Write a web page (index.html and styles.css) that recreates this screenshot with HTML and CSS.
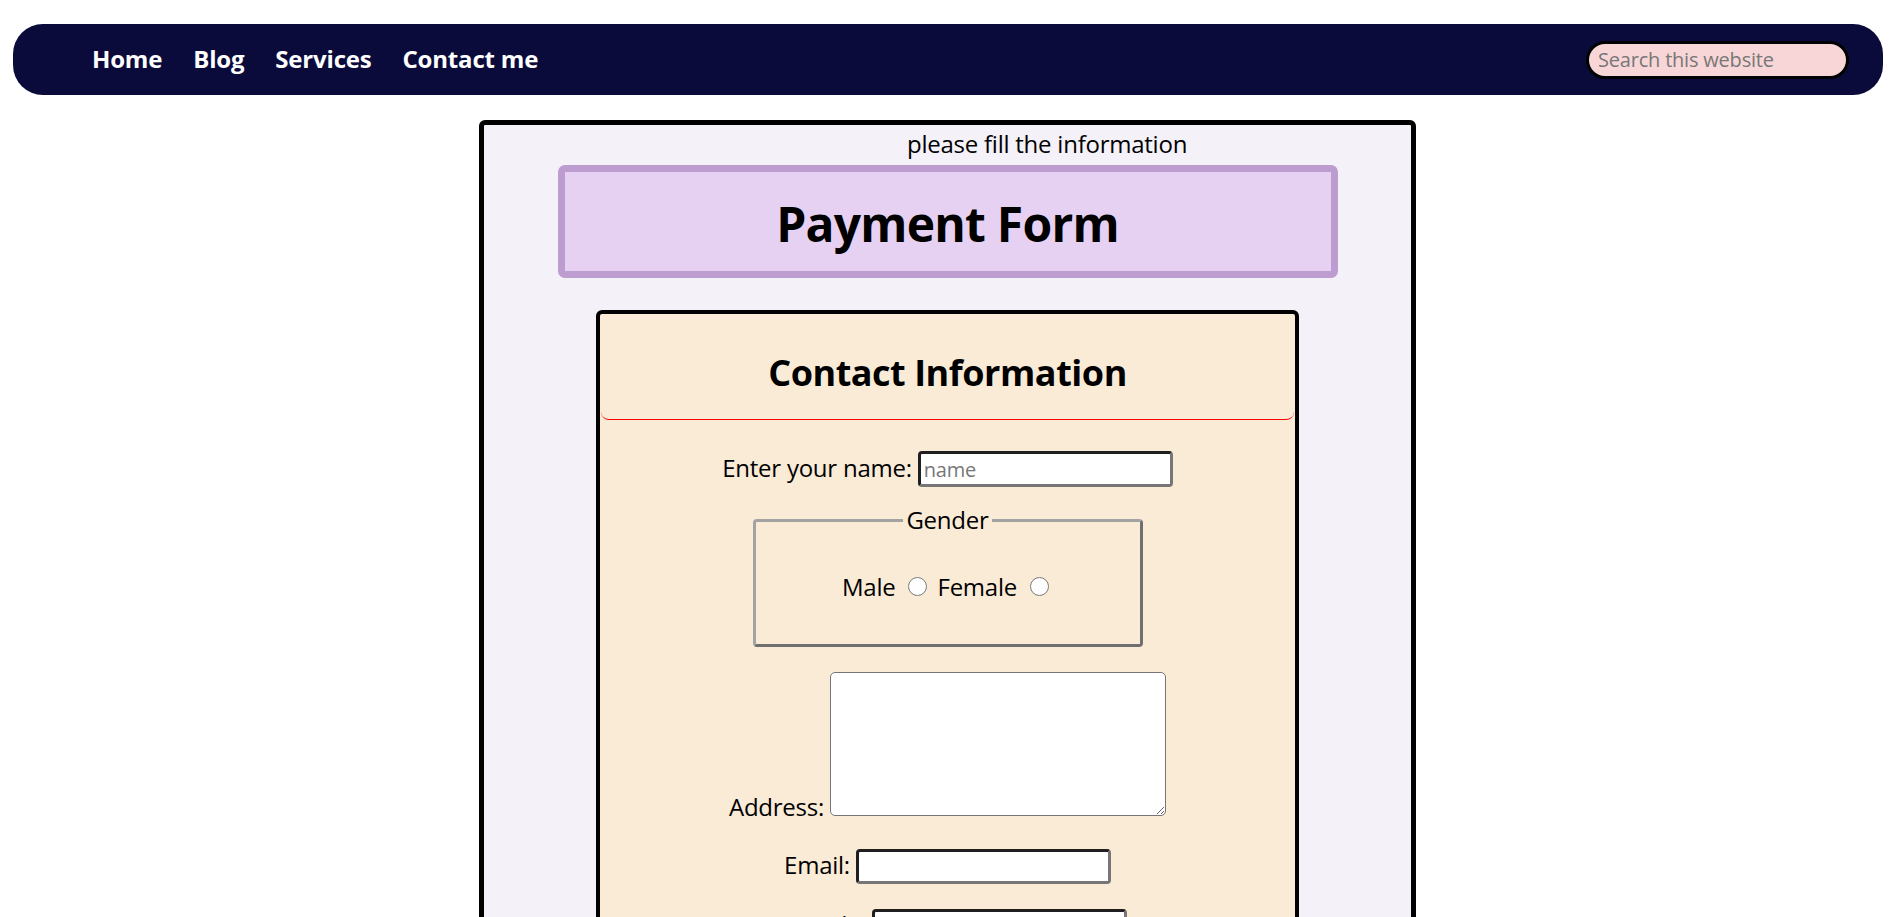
FILE: index.html
```html
<!DOCTYPE html>
<html lang="en">
<head>
<meta charset="utf-8">
<title>Payment Form</title>
<link rel="stylesheet" href="styles.css">
</head>
<body>
<nav class="topbar">
  <ul class="menu">
    <li><a href="#">Home</a></li>
    <li><a href="#">Blog</a></li>
    <li><a href="#">Services</a></li>
    <li><a href="#">Contact me</a></li>
  </ul>
  <input class="search" type="text" placeholder="Search this website">
</nav>

<main class="sheet">
  <p class="hint">please fill the information</p>
  <div class="title-box"><h1>Payment Form</h1></div>

  <section class="card">
    <div class="card-head"><h2>Contact Information</h2></div>

    <div class="row row-name"><label for="name">Enter your name:</label> <input class="field field-name" id="name" type="text" placeholder="name"></div>

    <fieldset class="gender">
      <legend>Gender</legend>
      <label for="male">Male</label> <input class="radio" type="radio" id="male" name="gender"> <label for="female">Female</label> <input class="radio" type="radio" id="female" name="gender">
    </fieldset>

    <div class="row row-address"><label for="address">Address:</label> <textarea class="area" id="address"></textarea></div>

    <div class="row row-email"><label for="email">Email:</label> <input class="field" id="email" type="email"></div>

    <div class="row row-next"><label for="zip">Zip code:</label> <input class="field" id="zip" type="text"></div>

    <div class="row row-next"><label for="phone">Phone:</label> <input class="field" id="phone" type="tel"></div>
  </section>
</main>
</body>
</html>
```

FILE: styles.css
```css
html, body {
  margin: 0;
  padding: 0;
  background: #ffffff;
}

body {
  font-family: "Open Sans", "Noto Sans", sans-serif;
  font-size: 24px;
  line-height: 32px;
  color: #000;
}

/* ---------- top bar ---------- */
.topbar {
  display: flex;
  align-items: center;
  justify-content: space-between;
  height: 71px;
  margin: 24px 9px 0 13px;
  background: #0b0b3b;
  border-radius: 30px;
}

.menu {
  display: flex;
  gap: 31px;
  list-style: none;
  margin: 0 0 2px;
  padding: 0 0 0 79px;
}

.menu a {
  color: #ffffff;
  font-weight: 700;
  font-size: 24px;
  letter-spacing: -0.008em;
  text-decoration: none;
}

.search {
  box-sizing: border-box;
  width: 263px;
  height: 38px;
  margin-right: 34px;
  padding: 0 9px;
  border: 3px solid #000;
  border-radius: 19px;
  background: #f8d6d7;
  font-family: "Open Sans", sans-serif;
  font-size: 20px;
  letter-spacing: -0.01em;
  color: #000;
}

.search::placeholder {
  color: #777777;
}

/* ---------- sheet ---------- */
.sheet {
  box-sizing: border-box;
  width: 937px;
  margin: 25px 0 0 calc(50% - 467px);
  padding: 3px 0 40px;
  background: #f4f1f9;
  border: 5px solid #000;
  border-radius: 6px;
}

.hint {
  margin: 0;
  padding-left: 423px;
  letter-spacing: -0.01em;
}

.title-box {
  box-sizing: border-box;
  display: flex;
  align-items: center;
  justify-content: center;
  width: 780px;
  height: 113px;
  margin: 5px auto 0;
  padding-top: 4px;
  background: #e6d1f3;
  border: 7px solid #bd9dd0;
  border-radius: 7px;
}

.title-box h1 {
  margin: 0;
  font-size: 48px;
  line-height: 64px;
  font-weight: 700;
  letter-spacing: -0.016em;
}

/* ---------- card ---------- */
.card {
  box-sizing: border-box;
  width: 703px;
  margin: 32px auto 0;
  padding-bottom: 30px;
  background: #faebd7;
  border: 4px solid #000;
  border-radius: 6px;
}

.card-head {
  padding: 35px 0 23px;
  margin: 0 1px;
  border-bottom: 1px solid #ff0000;
  border-radius: 0 0 8px 8px;
  text-align: center;
}

.card-head h2 {
  margin: 0;
  font-size: 36px;
  line-height: 47px;
  font-weight: 700;
  letter-spacing: -0.013em;
}

.row {
  text-align: center;
  letter-spacing: -0.01em;
}

.row-name { margin-top: 31px; }
.row-address { margin-top: 25px; }
.row-email { margin-top: 26px; }
.row-next { margin-top: 25px; }

.field {
  box-sizing: border-box;
  width: 255px;
  height: 35px;
  margin: 0;
  padding: 0 3px;
  vertical-align: baseline;
  font-family: "Open Sans", sans-serif;
  font-size: 20px;
  letter-spacing: -0.01em;
  background: #fff;
  border: 3px solid;
  border-color: #1f1f1f #767676 #767676 #1f1f1f;
  border-radius: 4px;
}

.field-name {
  height: 36px;
}

.field::placeholder {
  color: #777777;
}

.area {
  box-sizing: border-box;
  width: 336px;
  height: 144px;
  margin: 0;
  padding: 3px;
  vertical-align: baseline;
  font-family: "Liberation Mono", monospace;
  font-size: 20px;
  background: #fff;
  border: 1px solid #767676;
  border-radius: 5px;
}

/* ---------- gender fieldset ---------- */
.gender {
  box-sizing: border-box;
  width: 390px;
  margin: 17px auto 0;
  padding: 35px 18px 41px;
  text-align: center;
  letter-spacing: -0.01em;
  border: 3px solid;
  border-color: #a3a3a3 #6f6f6f #6f6f6f #a3a3a3;
  border-radius: 4px;
}

.gender legend {
  margin: 0 auto;
  padding: 0 3px;
  line-height: 32px;
}

.radio {
  appearance: none;
  -webkit-appearance: none;
  box-sizing: border-box;
  width: 19px;
  height: 19px;
  margin: 4px 4px 0 7px;
  vertical-align: baseline;
  background: #fff;
  border: 1.5px solid #7a7a7a;
  border-radius: 50%;
}
```
